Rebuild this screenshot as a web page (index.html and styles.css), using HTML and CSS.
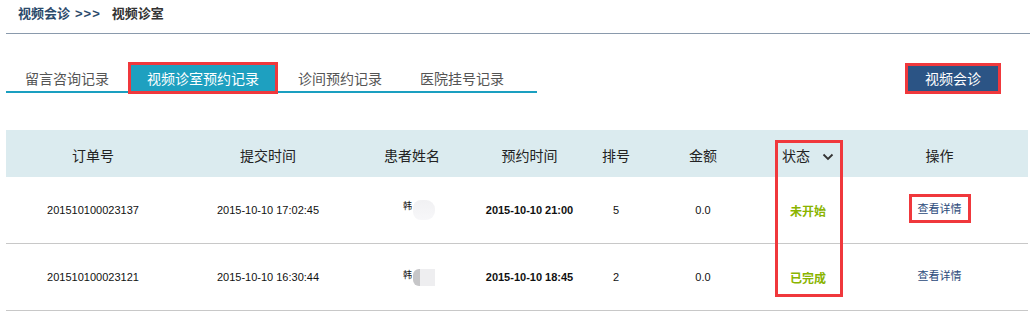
FILE: index.html
```html
<!DOCTYPE html>
<html lang="zh">
<head>
    <meta charset="UTF-8">
    <title>视频诊室</title>
    <link rel="stylesheet" href="styles.css">
</head>
<body>

<div class="crumb">
    <span class="crumb-parent">视频会诊</span><span class="crumb-sep">&gt;&gt;&gt;</span><span class="crumb-current">视频诊室</span>
</div>

<!-- 标签栏 -->
<div class="toolbar">
    <div class="tabs">
        <span class="tab tab-first">留言咨询记录</span>
        <span class="tab active">视频诊室预约记录</span>
        <span class="tab tab-third">诊间预约记录</span>
        <span class="tab">医院挂号记录</span>
    </div>
    <button class="video-btn" type="button">视频会诊</button>
</div>

<!-- 预约记录表 -->
<div class="table-wrap">
    <table class="records">
        <colgroup>
            <col style="width:174px">
            <col style="width:176px">
            <col style="width:112px">
            <col style="width:123px">
            <col style="width:50px">
            <col style="width:124px">
            <col style="width:86px">
            <col style="width:177px">
        </colgroup>
        <thead>
            <tr>
                <th>订单号</th>
                <th>提交时间</th>
                <th>患者姓名</th>
                <th>预约时间</th>
                <th>排号</th>
                <th>金额</th>
                <th>状态<svg class="chevron" width="12" height="8" viewBox="0 0 12 8"><polyline points="1.5,1.5 6,6 10.5,1.5" fill="none" stroke="#333" stroke-width="1.8"/></svg></th>
                <th>操作</th>
            </tr>
        </thead>
        <tbody>
            <tr>
                <td>201510100023137</td>
                <td>2015-10-10 17:02:45</td>
                <td class="patient"><span class="name">韩</span><span class="blur"></span></td>
                <td class="strong">2015-10-10 21:00</td>
                <td>5</td>
                <td>0.0</td>
                <td class="status">未开始</td>
                <td><a href="#" class="detail marked">查看详情</a></td>
            </tr>
            <tr>
                <td>201510100023121</td>
                <td>2015-10-10 16:30:44</td>
                <td class="patient"><span class="name">韩</span><span class="blur blur-dark"></span></td>
                <td class="strong">2015-10-10 18:45</td>
                <td>2</td>
                <td>0.0</td>
                <td class="status">已完成</td>
                <td><a href="#" class="detail">查看详情</a></td>
            </tr>
        </tbody>
    </table>
    <!-- 标注框 -->
    <div class="mark-status"></div>
</div>

</body>
</html>
```

FILE: styles.css
```css
body {
    margin: 0;
    padding: 0 5px 0 6px;
    background-color: #fff;
    font-family: "Liberation Sans", "Noto Sans CJK SC", sans-serif;
    color: #222;
}
.crumb {
    height: 33px;
    padding-left: 12px;
    border-bottom: 1px solid #8a9aac;
    font-family: "Noto Sans CJK SC", sans-serif;
    font-size: 13px;
    font-weight: bold;
    line-height: 26px;
}
.crumb-parent {
    color: #2b4a6b;
}
.crumb-sep {
    margin: 0 11px 0 5px;
    letter-spacing: 1px;
    color: #2b4a6b;
    font-family: "Liberation Sans", sans-serif;
}
.crumb-current {
    color: #333;
}
.toolbar {
    display: flex;
    justify-content: space-between;
    align-items: flex-start;
    margin-top: 31px;
}
.tabs {
    display: flex;
    gap: 6px;
    width: 531px;
    height: 26px;
    border-bottom: 2px solid #1a9fc0;
    font-family: "Noto Sans CJK SC", sans-serif;
    font-size: 14px;
}
.tab {
    display: block;
    height: 26px;
    line-height: 27px;
    padding: 0 16px;
    color: #555;
}
.tab-first {
    margin-left: 3px;
}
.active {
    background-color: #1ea0c0;
    color: #fff;
    outline: 3px solid #f0383c;
}
.tab-third {
    margin-left: 1px;
}
.video-btn {
    margin: 1px 32px 0 0;
    width: 90px;
    height: 25px;
    padding: 0;
    border: none;
    background-color: #2b5485;
    color: #fff;
    font-family: "Noto Sans CJK SC", sans-serif;
    font-size: 14px;
    line-height: 25px;
    outline: 3px solid #f0383c;
}
.table-wrap {
    position: relative;
    margin-top: 37px;
    width: 1022px;
}
.records {
    width: 1022px;
    border-collapse: collapse;
    table-layout: fixed;
}
.records th {
    height: 45px;
    padding: 2px 0 0;
    background-color: #dbebef;
    font-family: "Noto Sans CJK SC", sans-serif;
    font-size: 14px;
    font-weight: normal;
    color: #222;
    text-align: center;
    vertical-align: middle;
}
.chevron {
    margin-left: 12px;
    vertical-align: middle;
}
.records td {
    height: 66px;
    padding: 0;
    border-bottom: 1px solid #c8c8c8;
    font-size: 11px;
    color: #111;
    text-align: center;
    vertical-align: middle;
}
.records td.strong {
    font-weight: bold;
}
.records td.patient {
    padding-left: 14px;
}
.name {
    display: inline-block;
    font-family: "Noto Sans CJK SC", sans-serif;
    font-size: 9px;
    line-height: 10px;
    vertical-align: top;
    margin-top: 1px;
}
.blur {
    display: inline-block;
    width: 22px;
    height: 20px;
    margin-left: 1px;
    border-radius: 8px 9px 9px 8px;
    background: linear-gradient(#f1f1f3, #f7f7f9);
    vertical-align: middle;
}
.blur-dark {
    height: 17px;
    border-radius: 6px 0 0 6px;
    background: linear-gradient(90deg, #c6c6c8 0, #c6c6c8 7px, #eeeef0 7px);
}
.records td.status {
    font-family: "Noto Sans CJK SC", sans-serif;
    font-size: 12px;
    font-weight: bold;
    color: #8ab400;
}
.detail {
    display: inline-block;
    padding: 4px 6px;
    margin-top: -4px;
    font-family: "Noto Sans CJK SC", sans-serif;
    font-size: 11px;
    line-height: 15px;
    color: #2b4a7a;
    text-decoration: none;
}
.marked {
    outline: 3px solid #f0383c;
}
.mark-status {
    position: absolute;
    left: 769px;
    top: 10px;
    width: 62px;
    height: 151px;
    border: 3px solid #f0383c;
}
```
